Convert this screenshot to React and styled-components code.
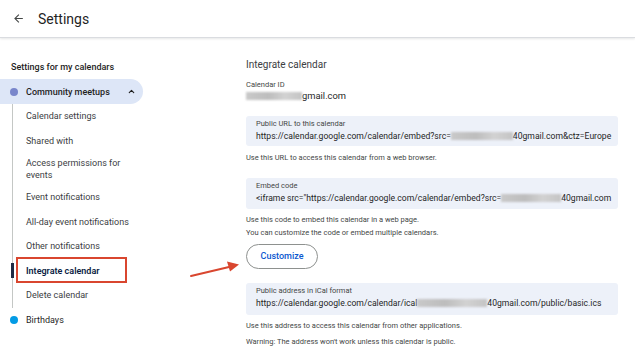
import React from 'react';
import styled, { createGlobalStyle } from 'styled-components';

const GlobalStyle = createGlobalStyle`
  html, body {
    margin: 0;
    padding: 0;
    background: #ffffff;
    font-family: Roboto, "Liberation Sans", Arial, sans-serif;
    color: #1f1f1f;
  }
`;

const Page = styled.div`
  position: relative;
  width: 635px;
  height: 346px;
  overflow: hidden;
`;

const Header = styled.header`
  height: 37px;
  display: flex;
  align-items: center;
  gap: 13px;
  padding-left: 12px;
  border-bottom: 1px solid #dadce0;
  box-shadow: 0 1px 2px rgba(60, 64, 67, 0.12);
`;

const BackButton = styled.div`
  width: 13px;
  height: 13px;
  display: flex;
  color: #444746;
`;

const Title = styled.h1`
  margin: 0;
  font-size: 14px;
  font-weight: 400;
  color: #1f1f1f;
`;

const Main = styled.main`
  display: flex;
`;

const Sidebar = styled.nav`
  width: 246px;
  flex-shrink: 0;
  padding-top: 22px;
`;

const SideHeading = styled.div`
  padding-left: 11px;
  font-size: 9px;
  font-weight: 500;
  line-height: 14px;
  margin-bottom: 5px;
  color: #1f1f1f;
`;

const CalendarRow = styled.div`
  width: 143px;
  height: 25px;
  box-sizing: border-box;
  display: flex;
  align-items: center;
  padding: 0 7px 0 10px;
  gap: 8px;
  border-radius: 0 13px 13px 0;
  background: ${(p) => (p.$open ? '#dde6f7' : 'transparent')};
  font-size: 9px;
  font-weight: ${(p) => (p.$open ? 500 : 400)};
  color: #1f1f1f;
`;

const Dot = styled.span`
  width: 8px;
  height: 8px;
  border-radius: 50%;
  background: ${(p) => p.$color};
  flex-shrink: 0;
`;

const RowLabel = styled.span`
  flex: 1;
`;

const Chevron = styled.svg`
  width: 9px;
  height: 9px;
`;

const SubList = styled.div`
  margin-left: 12px;
  border-left: 1px solid #c4c7c5;
  width: 180px;
`;

const NavItem = styled.div`
  position: relative;
  min-height: 24.5px;
  box-sizing: border-box;
  display: flex;
  align-items: center;
  padding: ${(p) => (p.$twoLine ? '4px 0' : '0')};
  padding-left: 13px;
  font-size: 9px;
  line-height: 12px;
  font-weight: ${(p) => (p.$active ? 600 : 400)};
  color: ${(p) => (p.$active ? '#0b1d44' : '#3c4043')};

  ${(p) =>
    p.$active &&
    `
    &::before {
      content: '';
      position: absolute;
      left: -2px;
      top: 4px;
      bottom: 5px;
      width: 3px;
      background: #1f2a44;
    }
  `}

  ${(p) =>
    p.$highlight &&
    `
    &::after {
      content: '';
      position: absolute;
      left: 3px;
      width: 111px;
      top: -1.5px;
      bottom: 0;
      border: 2px solid #d9462f;
      box-sizing: border-box;
    }
  `}
`;

const Content = styled.section`
  width: 372px;
  padding-top: 20px;
`;

const SectionTitle = styled.h2`
  margin: 0;
  font-size: 10px;
  font-weight: 400;
  line-height: 14px;
  color: #3c4043;
`;

const FieldLabel = styled.div`
  font-size: 7.5px;
  line-height: 10px;
  color: #444746;
  margin-top: ${(p) => p.$top || 0}px;
`;

const FieldValue = styled.div`
  font-size: 9.4px;
  line-height: 12px;
  color: #1f1f1f;
  white-space: nowrap;
`;

const Redacted = styled.span`
  display: inline-block;
  width: ${(p) => p.$w}px;
  height: 8px;
  vertical-align: -1px;
  background: linear-gradient(90deg, #c9c9c9, #bdbdbd 40%, #d2d2d2 70%, #c4c4c4);
  filter: blur(0.8px);
`;

const UrlBox = styled.div`
  margin-top: ${(p) => p.$top}px;
  height: ${(p) => p.$h || 30}px;
  box-sizing: border-box;
  padding: 3px 0 3px 10px;
  background: #edf1f9;
  border-radius: 3px;
  overflow: hidden;
`;

const BoxLabel = styled.div`
  font-size: 7.5px;
  line-height: 10px;
  color: #444746;
`;

const BoxValue = styled.div`
  margin-top: 1px;
  font-size: 8.6px;
  line-height: 13px;
  color: #1f1f1f;
  white-space: nowrap;
`;

const Help = styled.p`
  margin: ${(p) => p.$top}px 0 0;
  font-size: 7.5px;
  line-height: 10px;
  color: #444746;
`;

const OutlineButton = styled.button`
  margin-top: 6px;
  width: 72px;
  height: 25px;
  border: 1px solid #8e918f;
  border-radius: 13px;
  background: #ffffff;
  color: #0b57d0;
  font-family: inherit;
  font-size: 9px;
  font-weight: 500;
  padding: 0;
`;

const Annotation = styled.svg`
  position: absolute;
  left: 185px;
  top: 255px;
  width: 60px;
  height: 28px;
`;

export default function App() {
  return (
    <Page>
      <GlobalStyle />
      <Header>
        <BackButton>
          <svg viewBox="0 0 24 24" width="13" height="13" fill="currentColor">
            <path d="M20 11H7.83l5.59-5.59L12 4l-8 8 8 8 1.41-1.41L7.83 13H20v-2z" />
          </svg>
        </BackButton>
        <Title>Settings</Title>
      </Header>
      <Main>
        <Sidebar>
          <SideHeading>Settings for my calendars</SideHeading>
          <CalendarRow $open>
            <Dot $color="#7986cb" />
            <RowLabel>Community meetups</RowLabel>
            <Chevron viewBox="0 0 24 24" fill="none" stroke="#1f1f1f" strokeWidth="3" strokeLinecap="round" strokeLinejoin="round">
              <path d="M6 15l6-6 6 6" />
            </Chevron>
          </CalendarRow>
          <SubList>
            <NavItem>Calendar settings</NavItem>
            <NavItem>Shared with</NavItem>
            <NavItem $twoLine>Access permissions for<br />events</NavItem>
            <NavItem>Event notifications</NavItem>
            <NavItem>All-day event notifications</NavItem>
            <NavItem>Other notifications</NavItem>
            <NavItem $active $highlight>Integrate calendar</NavItem>
            <NavItem>Delete calendar</NavItem>
          </SubList>
          <CalendarRow>
            <Dot $color="#039be5" />
            <RowLabel>Birthdays</RowLabel>
          </CalendarRow>
        </Sidebar>
        <Content>
          <SectionTitle>Integrate calendar</SectionTitle>
          <FieldLabel $top={8}>Calendar ID</FieldLabel>
          <FieldValue>
            <Redacted $w={56} />gmail.com
          </FieldValue>

          <UrlBox $top={14}>
            <BoxLabel>Public URL to this calendar</BoxLabel>
            <BoxValue>
              https://calendar.google.com/calendar/embed?src=<Redacted $w={62} />40gmail.com&amp;ctz=Europe
            </BoxValue>
          </UrlBox>
          <Help $top={7}>Use this URL to access this calendar from a web browser.</Help>

          <UrlBox $top={15} $h={31}>
            <BoxLabel>Embed code</BoxLabel>
            <BoxValue>
              &lt;iframe src="https://calendar.google.com/calendar/embed?src=<Redacted $w={60} />40gmail.com
            </BoxValue>
          </UrlBox>
          <Help $top={6}>Use this code to embed this calendar in a web page.</Help>
          <Help $top={2.5}>You can customize the code or embed multiple calendars.</Help>
          <OutlineButton>Customize</OutlineButton>

          <UrlBox $top={14} $h={32}>
            <BoxLabel>Public address in iCal format</BoxLabel>
            <BoxValue>
              https://calendar.google.com/calendar/ical<Redacted $w={70} />40gmail.com/public/basic.ics
            </BoxValue>
          </UrlBox>
          <Help $top={6}>Use this address to access this calendar from other applications.</Help>
          <Help $top={6}>Warning: The address won't work unless this calendar is public.</Help>
        </Content>
      </Main>
      <Annotation viewBox="0 0 60 28">
        <line x1="6" y1="21" x2="44" y2="12" stroke="#d9462f" strokeWidth="2" strokeLinecap="round" />
        <polygon points="54,9.5 42,6.5 45,16.5" fill="#d9462f" />
      </Annotation>
    </Page>
  );
}
